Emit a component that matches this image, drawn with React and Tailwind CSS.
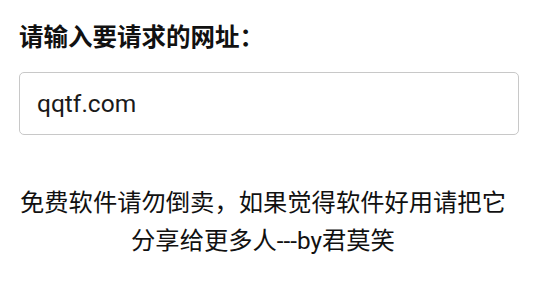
export default function App() {
  return (
    <div
      className="min-h-screen bg-white px-[19px] pt-[22px]"
      style={{ fontFamily: 'Roboto, "Noto Sans CJK SC", sans-serif' }}
    >
      {/* Label */}
      <h1 className="text-[24.5px] leading-[32px] font-bold text-[#111]">
        请输入要请求的网址：
      </h1>

      {/* URL input */}
      <input
        type="text"
        defaultValue="qqtf.com"
        className="mt-[18px] block h-[63px] w-[500px] rounded-[5px] border border-[#c8c8c8] bg-white pl-[17px] text-[24.5px] text-[#1a1a1a] outline-none"
        style={{ fontFamily: 'Roboto, "Noto Sans CJK SC", sans-serif' }}
      />

      {/* Notice */}
      <p className="mt-[49px] mr-[8px] text-center text-[24.3px] leading-[38px] text-[#111]">
        免费软件请勿倒卖，如果觉得软件好用请把它
        <br />
        分享给更多人---by君莫笑
      </p>
    </div>
  );
}
